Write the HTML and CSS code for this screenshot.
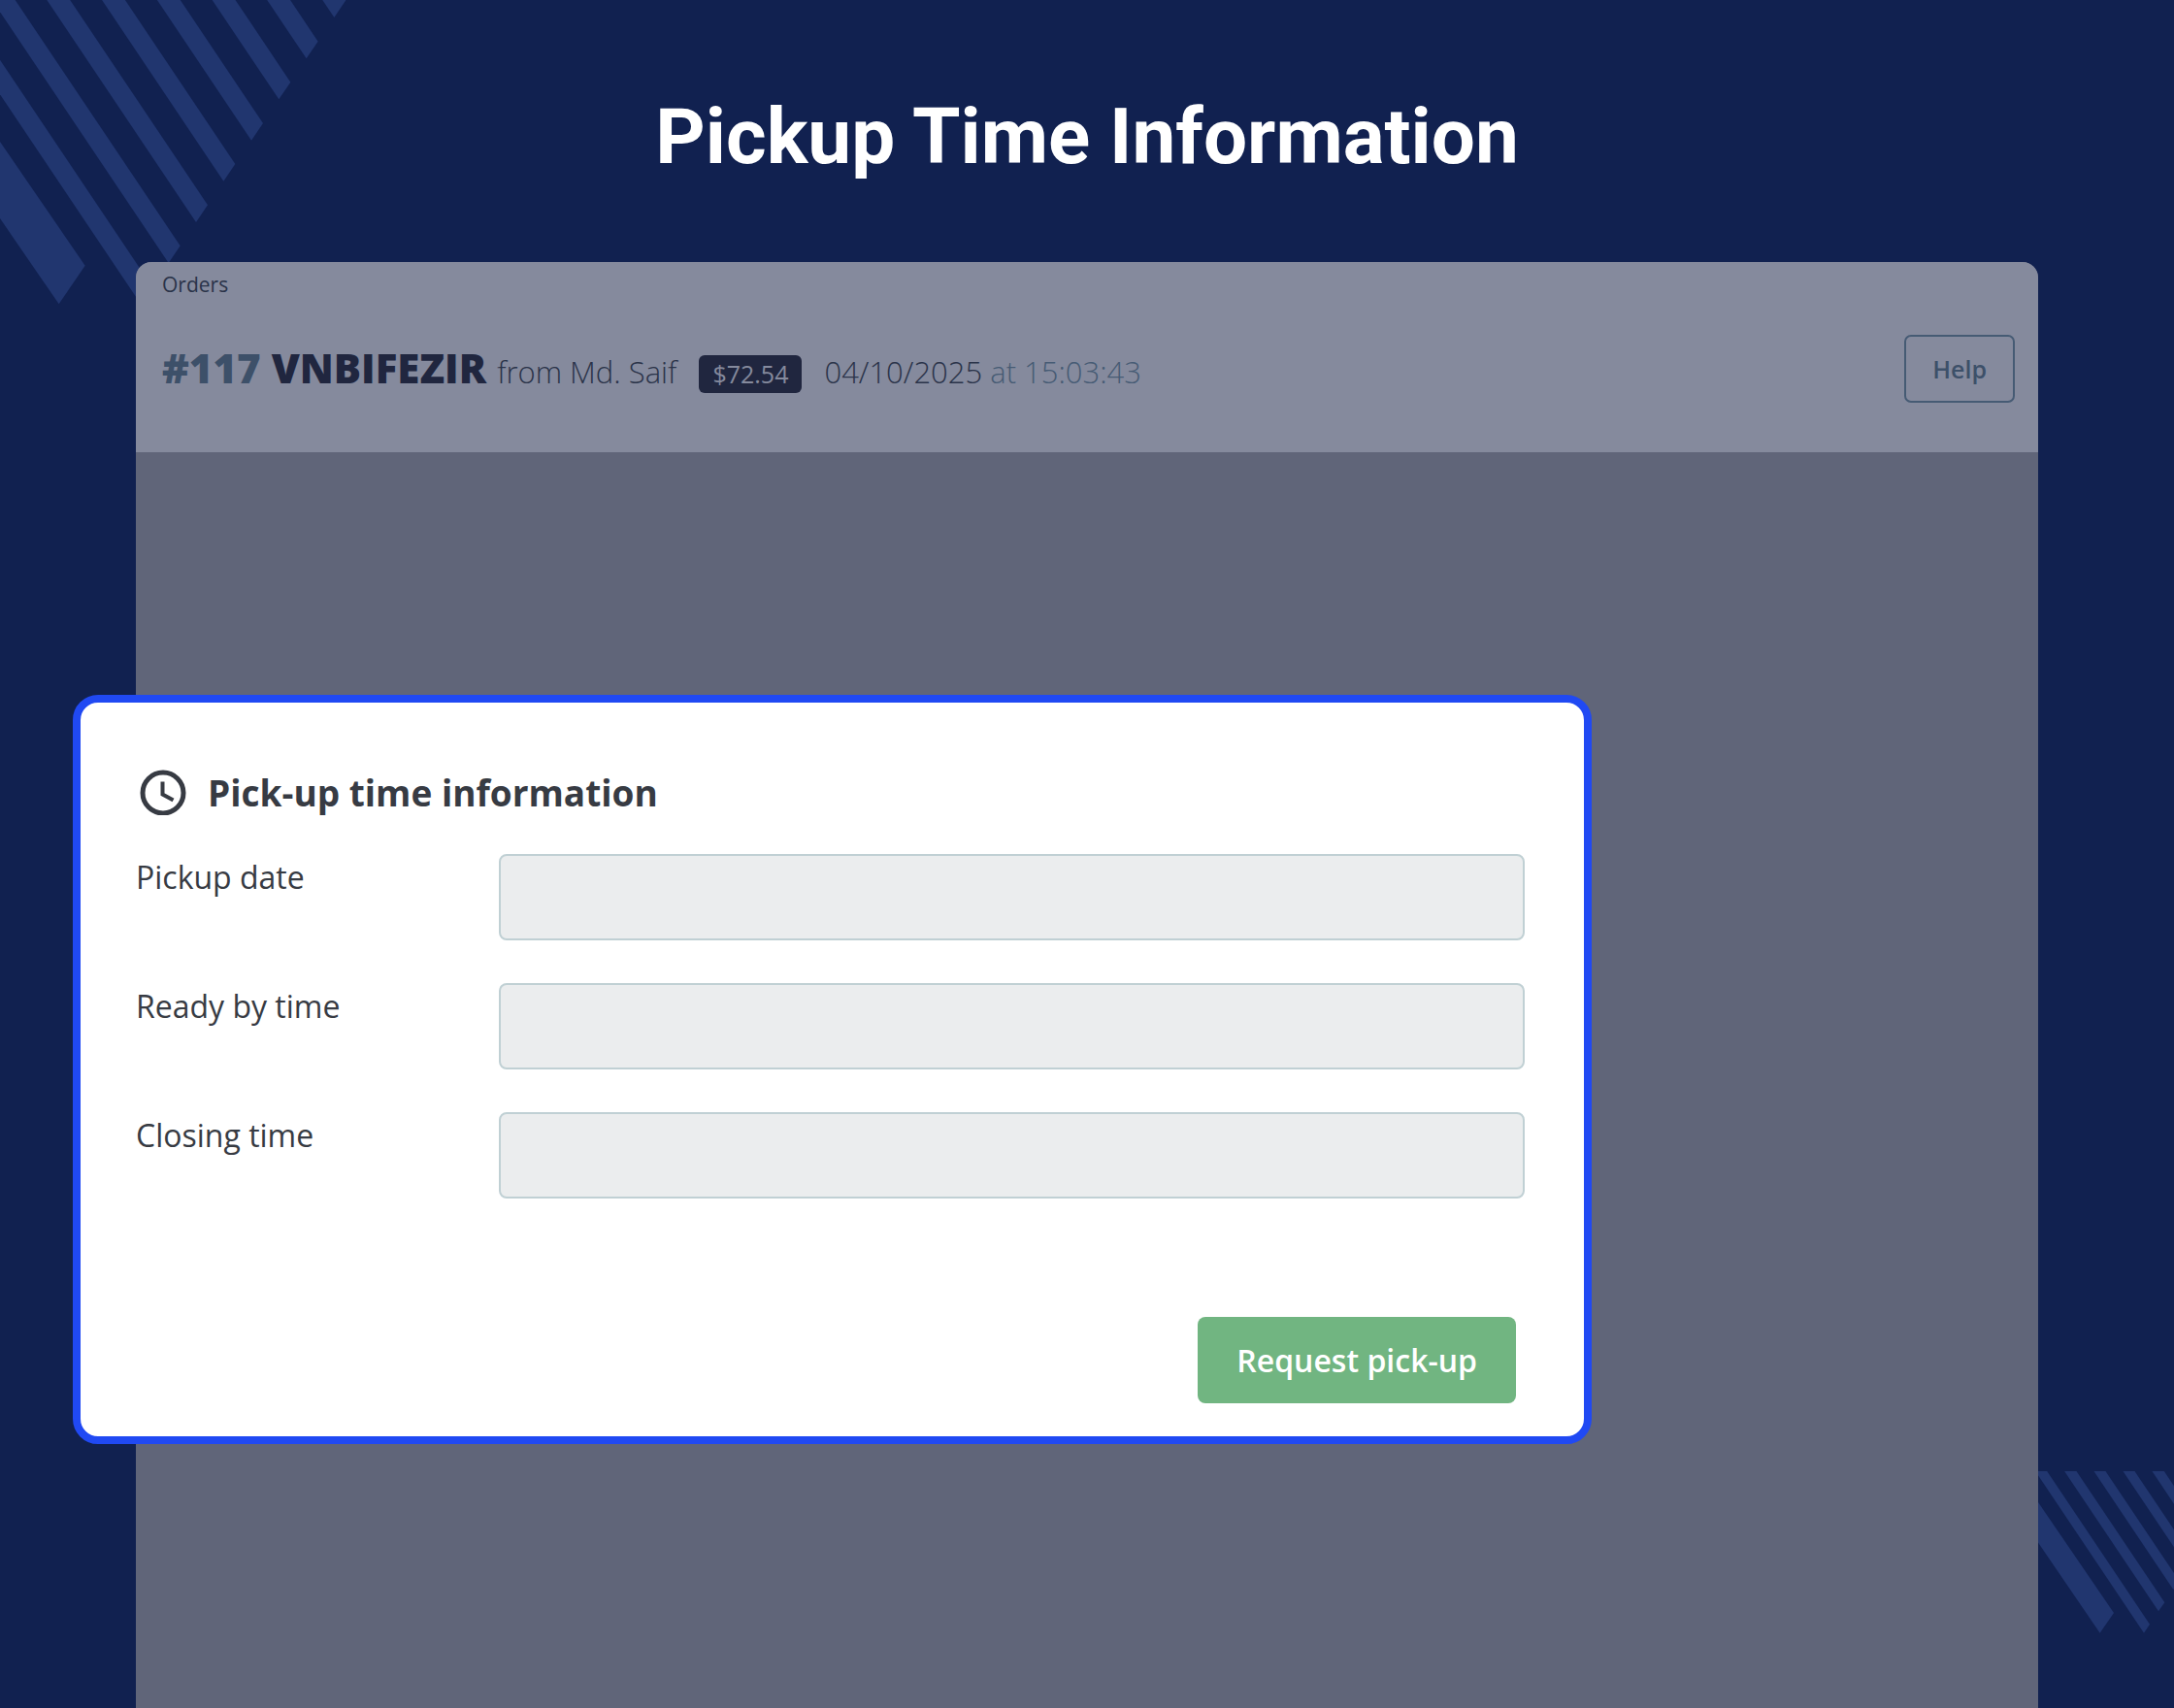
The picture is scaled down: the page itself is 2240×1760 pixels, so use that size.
FILE: index.html
```
<!DOCTYPE html>
<html lang="en">
<head>
  <meta charset="UTF-8" />
  <title>Pickup Time Information</title>
  <link rel="stylesheet" href="styles.css">
</head>
<body>
  <!-- Corner stripes -->
  <svg class="stripes stripes-top" viewBox="0 0 1140 990" aria-hidden="true">
    <path d="M182 940l81-119-800-1164-81 119z" />
    <path d="M435 940l36-53-800-1192-36 53z" />
    <path d="M521 813l36-53-800-1192-36 53z" />
    <path d="M606 687l36-53-800-1192-36 53z" />
    <path d="M691 560l36-53-800-1192-36 53z" />
    <path d="M777 434l36-53-800-1192-36 53z" />
    <path d="M862 307l36-53-800-1192-36 53z" />
    <path d="M947 181l36-53-800-1192-36 53z" />
    <path d="M1033 54l36-53-800-1192-36 53z" />
  </svg>
  <svg class="stripes stripes-bottom" viewBox="0 78 480 552" aria-hidden="true">
    <path d="M251 578l43-62-400-585-43 62z" />
    <path d="M387 578l18-27-400-596-18 27z" />
    <path d="M432 511l19-27-400-596-19 27z" />
    <path d="M478 444l18-27-400-596-18 27z" />
    <path d="M523 377l18-27-400-596-18 27z" />
    <path d="M568 310l19-27-400-596-19 27z" />
  </svg>

  <h1>Pickup Time Information</h1>

  <main class="panel">
    <header class="order-header">
      <div class="breadcrumb">Orders</div>
      <div class="order-row">
        <h2 class="order-title">
          <span class="order-id">#117</span>
          <span class="order-ref">VNBIFEZIR</span>
          <span class="customer">from Md. Saif</span>
          <span class="badge">$72.54</span>
          <span class="date">04/10/2025 <span class="time">at 15:03:43</span></span>
        </h2>
        <button class="help" type="button">Help</button>
      </div>
    </header>

    <form class="pickup">
      <h3>
        <svg class="clock" viewBox="0 0 48 48" aria-hidden="true">
          <circle cx="24" cy="25" r="21" />
          <path d="M23.500 13.500v13l11 6" />
        </svg>
        Pick-up time information
      </h3>
      <div class="field">
        <label for="pickupDate">Pickup date</label>
        <input type="text" id="pickupDate">
      </div>
      <div class="field">
        <label for="readyTime">Ready by time</label>
        <input type="text" id="readyTime">
      </div>
      <div class="field">
        <label for="closingTime">Closing time</label>
        <input type="text" id="closingTime">
      </div>
      <div class="actions">
        <button class="request" type="button">Request pick-up</button>
      </div>
    </form>
  </main>
</body>
</html>
```
FILE: styles.css
```
* {
  box-sizing: border-box;
}
body {
  position: relative;
  display: flex;
  flex-direction: column;
  min-height: 100vh;
  margin: 0;
  background: #112150;
  color: #373b43;
  font-family: "Open Sans", "Noto Sans", sans-serif;
}
h1, h2, h3 {
  margin: 0;
}
h1 {
  padding: 93px 0 81px;
  color: #ffffff;
  font-family: Roboto, sans-serif;
  font-size: 80px;
  font-weight: 700;
  line-height: 96px;
  text-align: center;
}
.stripes {
  position: absolute;
  fill: #21366f;
}
.stripes-top {
  top: 0;
  left: 0;
  width: 380px;
}
.stripes-bottom {
  right: 0;
  bottom: 60px;
  width: 160px;
}

/* Order panel */
.panel {
  position: relative;
  flex: 1;
  margin: 0 6.25%;
  border-radius: 16px 16px 0 0;
  background: #606579;
}
.order-header {
  height: 196px;
  padding: 7px 24px 0 27px;
  border-radius: 16px 16px 0 0;
  background: #858a9d;
  color: #2a3349;
}
.breadcrumb {
  font-size: 21px;
  line-height: 32px;
}
.order-row {
  display: flex;
  justify-content: space-between;
  align-items: center;
  margin-top: 36px;
}
.order-title {
  display: flex;
  align-items: baseline;
  gap: 11px;
  margin-bottom: 4px;
  font-size: 31px;
  font-weight: 300;
}
.order-id, .order-ref {
  font-size: 42px;
  font-weight: 800;
}
.order-id {
  color: #3d5069;
}
.order-ref {
  color: #20263f;
}
.badge {
  margin: 0 12px;
  padding: 0 14px;
  border-radius: 6px;
  background: #20263f;
  color: #858a9d;
  font-size: 25px;
  font-weight: 400;
  line-height: 39px;
}
.time {
  color: #465b74;
}
.help {
  height: 70px;
  padding: 0 27px;
  border: 2px solid #465b74;
  border-radius: 7px;
  background: transparent;
  color: #3d5069;
  font-family: inherit;
  font-size: 25px;
  font-weight: 600;
}

/* Pick-up form, hangs over the left edge of the panel */
.pickup {
  margin: 250px 460px 0 -65px;
  padding: 68px 61px 34px 57px;
  border: 8px solid #2049f3;
  border-radius: 26px;
  background: #ffffff;
}
.pickup h3 {
  display: flex;
  align-items: center;
  gap: 22px;
  height: 48px;
  margin-bottom: 40px;
  padding-left: 4px;
  font-size: 37px;
  font-weight: 700;
}
.clock {
  width: 48px;
  height: 48px;
  fill: none;
  stroke: #373b43;
  stroke-width: 4;
}
.clock circle {
  stroke-width: 5;
}
.field {
  display: grid;
  grid-template-columns: 374px 1fr;
  margin-bottom: 44px;
}
.field label {
  font-size: 32px;
  line-height: 48px;
}
.field input {
  width: 100%;
  height: 89px;
  padding: 0 24px;
  border: 2px solid #c0d0d4;
  border-radius: 8px;
  background: #ebedee;
  color: inherit;
  font-family: inherit;
  font-size: 32px;
}
.actions {
  display: flex;
  justify-content: flex-end;
  margin-top: 122px;
  padding-right: 9px;
}
.request {
  height: 89px;
  padding: 0 40px;
  border: none;
  border-radius: 8px;
  background: #71b581;
  color: #ffffff;
  font-family: inherit;
  font-size: 32px;
  font-weight: 600;
}
```
